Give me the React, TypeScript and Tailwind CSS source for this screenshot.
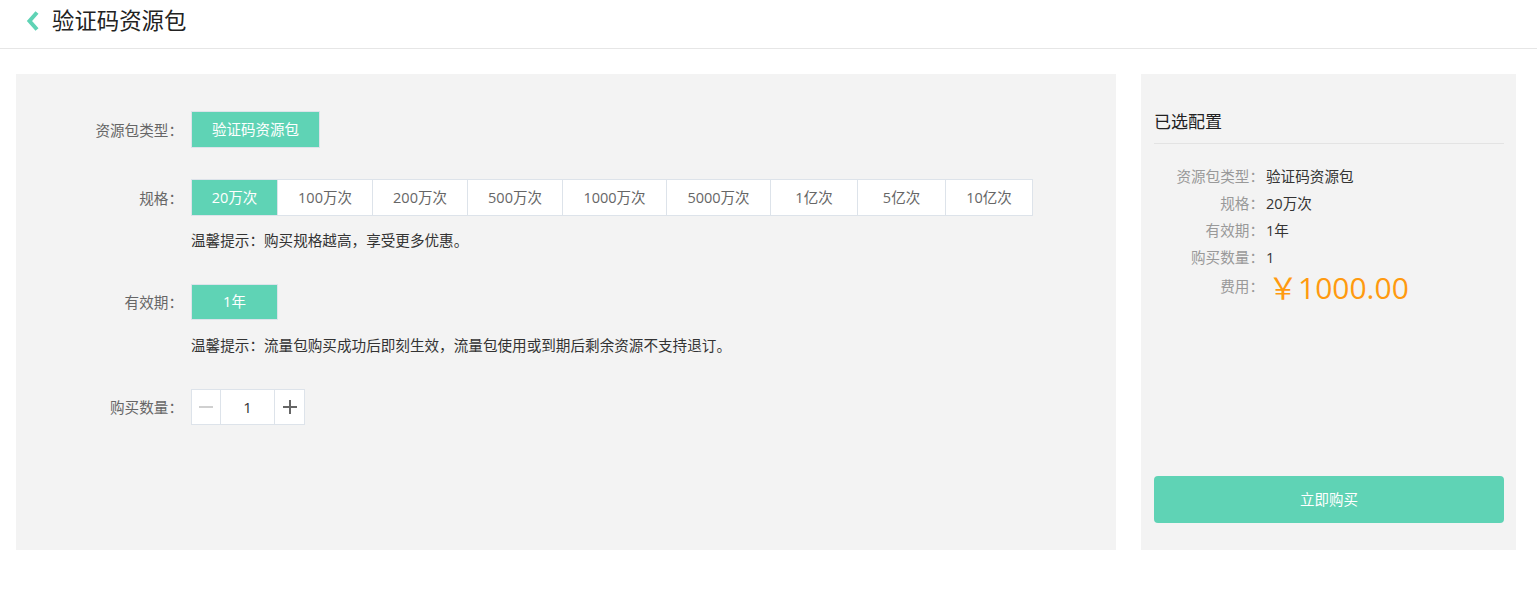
import React from "react";

const specs = [
  { t: "20万次", w: "w-[87px]" },
  { t: "100万次", w: "w-[95px]" },
  { t: "200万次", w: "w-[95px]" },
  { t: "500万次", w: "w-[95px]" },
  { t: "1000万次", w: "w-[104px]" },
  { t: "5000万次", w: "w-[104px]" },
  { t: "1亿次", w: "w-[87px]" },
  { t: "5亿次", w: "w-[88px]" },
  { t: "10亿次", w: "w-[87px]" },
];

const summary = [
  { l: "资源包类型：", v: "验证码资源包" },
  { l: "规格：", v: "20万次" },
  { l: "有效期：", v: "1年" },
  { l: "购买数量：", v: "1" },
];

function Label({ children }: { children: React.ReactNode }) {
  return (
    <div className="w-[167px] shrink-0 text-right text-[14.6px] leading-[20px] text-[#666]">
      {children}
    </div>
  );
}

export default function App() {
  return (
    <div className="min-h-[604px] w-full bg-white font-['Open_Sans','Noto_Sans_CJK_SC',sans-serif] text-[#333]">
      {/* header */}
      <div className="flex h-[49px] items-center border-b border-[#e6e6e6] pb-[7px] pl-[26px]">
        <svg width="14" height="20" viewBox="0 0 14 20" className="mr-[12px]">
          <polyline
            points="11,1.5 3.5,10 11,18.5"
            fill="none"
            stroke="#5fd3b5"
            strokeWidth="4"
          />
        </svg>
        <span className="text-[22.4px] leading-[28px] text-[#222]">验证码资源包</span>
      </div>

      {/* body */}
      <div className="flex gap-[25px] pl-4 pr-[21px] pt-[25px]">
        {/* left panel */}
        <div className="h-[476px] flex-1 bg-[#f3f3f3] pt-[37px]">
          {/* row 1 */}
          <div className="flex items-center">
            <Label>资源包类型：</Label>
            <div className="ml-[8px] flex h-[37px] w-[129px] items-center justify-center border border-[#dde3ea] bg-[#5fd3b5] text-[14.5px] text-white">
              验证码资源包
            </div>
          </div>

          {/* row 2 */}
          <div className="mt-[31px] flex items-center">
            <Label>规格：</Label>
            <div className="ml-[8px] flex h-[37px]">
              {specs.map((s, i) => (
                <div
                  key={s.t}
                  className={
                    "flex h-[37px] items-center justify-center border-y border-r border-[#dde3ea] text-[14.5px] " +
                    s.w +
                    (i === 0
                      ? " border-l bg-[#5fd3b5] text-white"
                      : " bg-white text-[#666]")
                  }
                >
                  {s.t}
                </div>
              ))}
            </div>
          </div>
          <div className="ml-[175px] mt-[14px] text-[14.6px] leading-[20px] text-[#333]">
            温馨提示：购买规格越高，享受更多优惠。
          </div>

          {/* row 3 */}
          <div className="mt-[34px] flex items-center">
            <Label>有效期：</Label>
            <div className="ml-[8px] flex h-[36px] w-[87px] items-center justify-center border border-[#dde3ea] bg-[#5fd3b5] text-[14.5px] text-white">
              1年
            </div>
          </div>
          <div className="ml-[175px] mt-[15px] text-[14.6px] leading-[20px] text-[#333]">
            温馨提示：流量包购买成功后即刻生效，流量包使用或到期后剩余资源不支持退订。
          </div>

          {/* row 4 */}
          <div className="mt-[34px] flex items-center">
            <Label>购买数量：</Label>
            <div className="ml-[8px] flex h-[36px] border border-[#dde3ea] bg-white">
              <div className="flex w-[29px] items-center justify-center border-r border-[#dde3ea]">
                <svg width="16" height="16" viewBox="0 0 16 16">
                  <line x1="1" y1="8" x2="15" y2="8" stroke="#d0d0d0" strokeWidth="2" />
                </svg>
              </div>
              <div className="flex w-[54px] items-center justify-center border-r border-[#dde3ea] text-[15px] text-[#333]">
                1
              </div>
              <div className="flex w-[29px] items-center justify-center">
                <svg width="16" height="16" viewBox="0 0 16 16">
                  <line x1="1" y1="8" x2="15" y2="8" stroke="#666666" strokeWidth="2" />
                  <line x1="8" y1="1" x2="8" y2="15" stroke="#666666" strokeWidth="2" />
                </svg>
              </div>
            </div>
          </div>
        </div>

        {/* right panel */}
        <div className="flex h-[476px] w-[375px] shrink-0 flex-col bg-[#f3f3f3] pb-[27px] pl-[13px] pr-[12px] pt-[37px]">
          <div className="border-b border-[#e3e3e3] pb-[10px] text-[17px] leading-[22px] text-[#222]">
            已选配置
          </div>
          <div className="mt-[19px] flex flex-col">
            {summary.map((r) => (
              <div key={r.l} className="flex h-[27px] items-center">
                <div className="w-[110px] shrink-0 text-right text-[14.6px] text-[#999]">{r.l}</div>
                <div className="ml-[2px] text-[14.6px] text-[#333]">{r.v}</div>
              </div>
            ))}
            <div className="flex items-start">
              <div className="mt-[5px] w-[110px] shrink-0 text-right text-[14.6px] leading-[20px] text-[#999]">
                费用：
              </div>
              <div className="ml-[4px] -mt-[1px] text-[30px] leading-[36px] text-[#ff9a0f]">￥1000.00</div>
            </div>
          </div>
          <button className="mt-auto flex h-[47px] w-full items-center justify-center rounded-[4px] bg-[#5fd3b5] text-[14.5px] text-white">
            立即购买
          </button>
        </div>
      </div>
    </div>
  );
}
